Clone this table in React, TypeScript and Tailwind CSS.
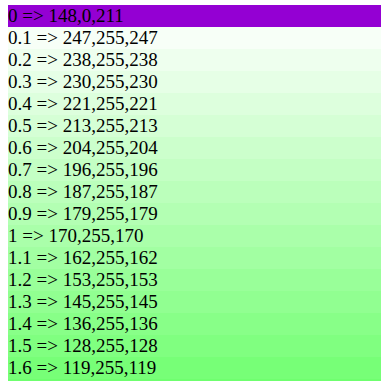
import React from "react";

const rows: { label: string; rgb: [number, number, number] }[] = [
  { label: "0", rgb: [148, 0, 211] },
];
for (let i = 1; i <= 16; i++) {
  const x = i / 10;
  const v = Math.round(255 - 85 * x);
  const label = Number.isInteger(x) ? String(x) : x.toFixed(1);
  rows.push({ label, rgb: [v, 255, v] });
}

export default function App() {
  return (
    <div className="pt-[5px] pl-[8px] h-[381px] overflow-hidden bg-white">
      <div className="flex flex-col">
        {rows.map((r) => (
          <div
            key={r.label}
            className="h-[22px] leading-[22px] text-[19px] text-black whitespace-nowrap font-['Liberation_Serif','Times_New_Roman',serif]"
            style={{
              backgroundColor: `rgb(${r.rgb[0]},${r.rgb[1]},${r.rgb[2]})`,
            }}
          >
            {r.label} =&gt; {r.rgb.join(",")}
          </div>
        ))}
        <div className="h-[22px] bg-[rgb(111,255,111)]" />
      </div>
    </div>
  );
}
